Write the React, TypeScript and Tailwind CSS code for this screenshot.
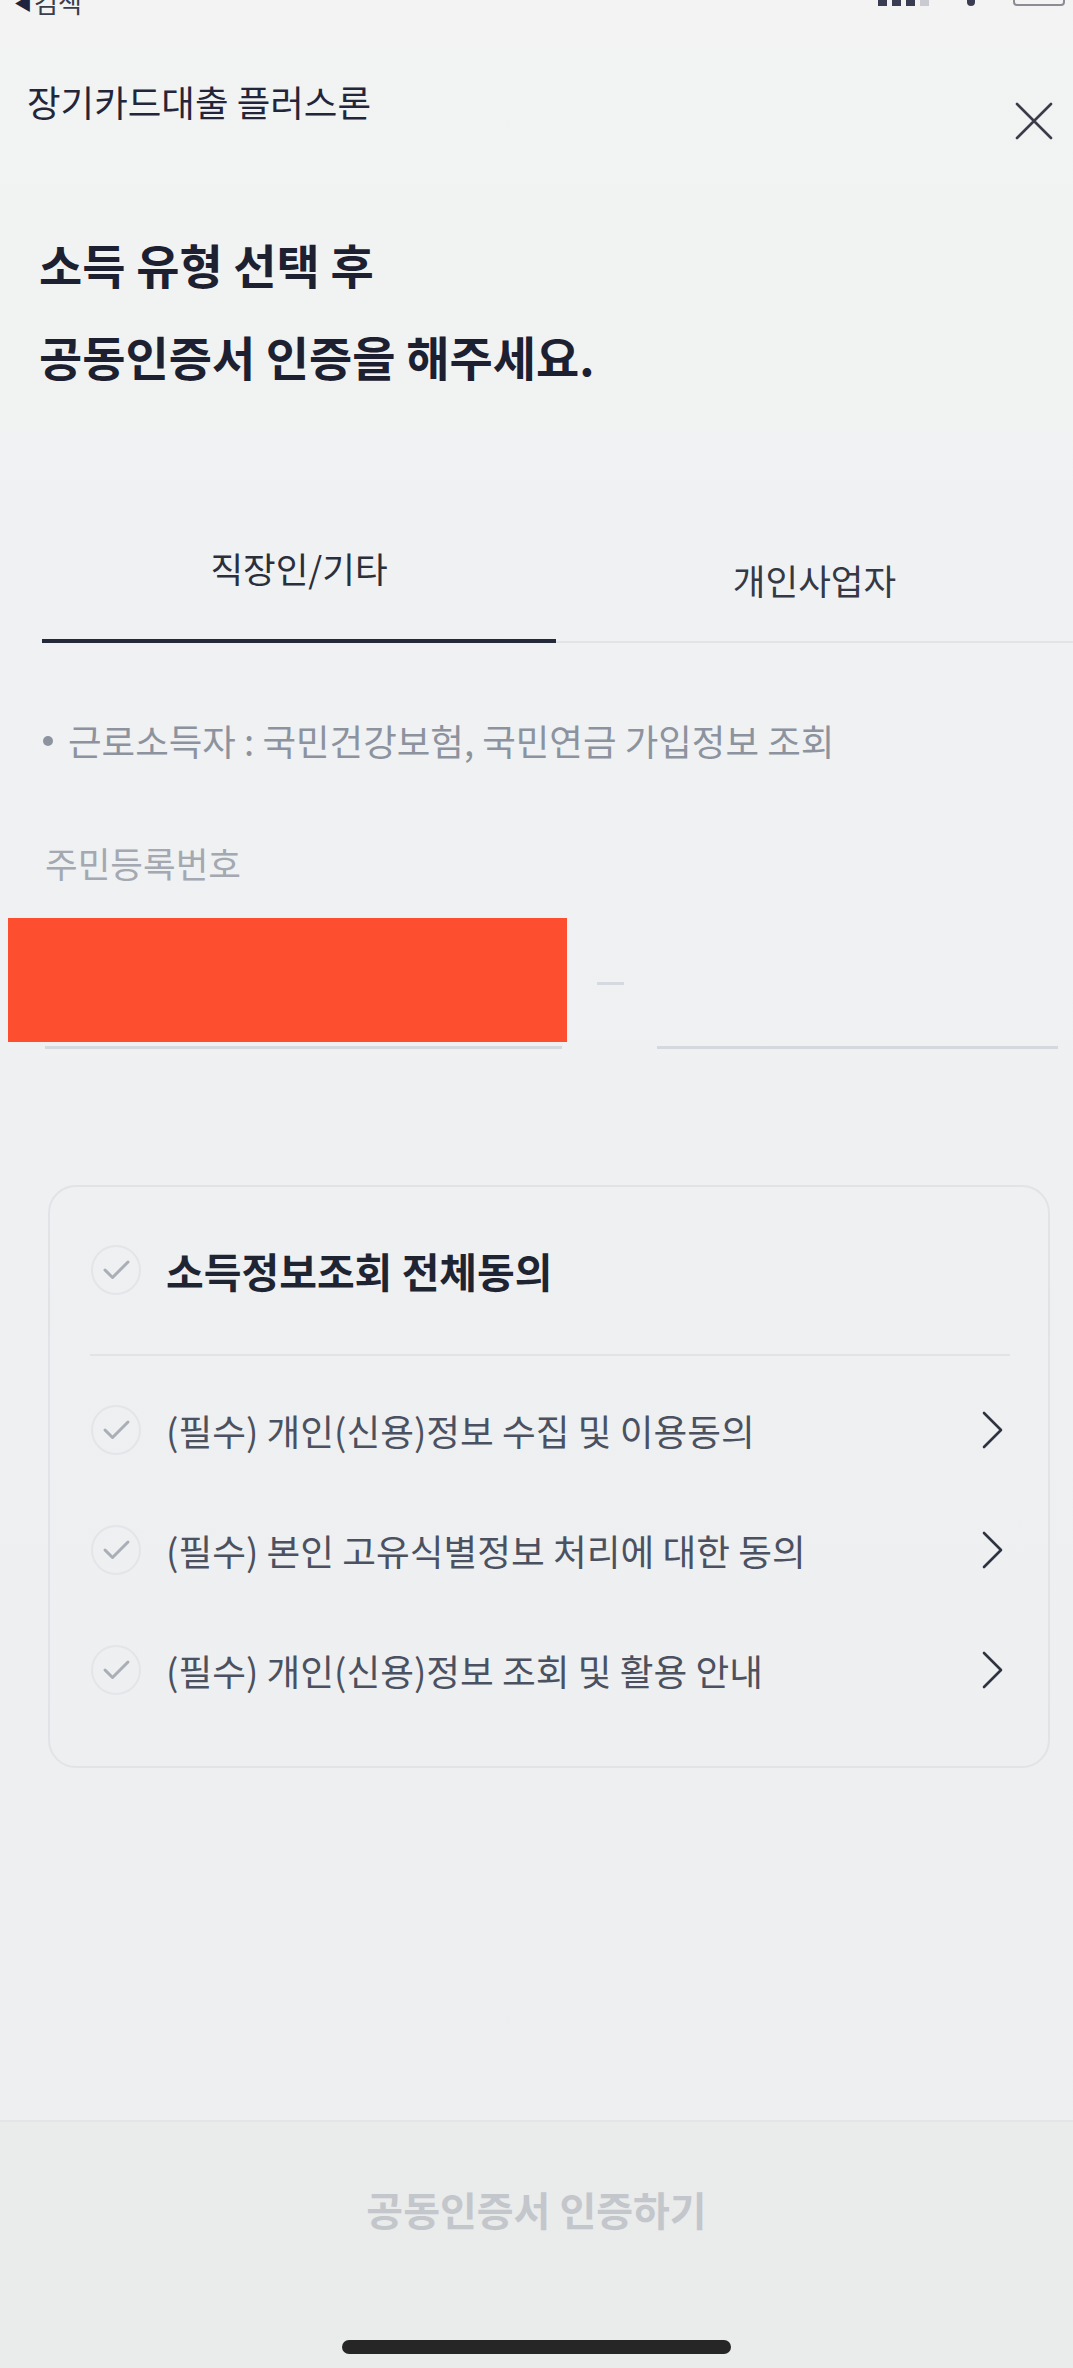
import React from "react";

const CheckCircle = () => (
  <svg width="50" height="50" viewBox="0 0 50 50" className="shrink-0">
    <circle cx="25" cy="25" r="24" fill="none" stroke="#e3e5e9" strokeWidth="2" />
    <path
      d="M14 25 L21.5 32.5 L37 17"
      fill="none"
      stroke="#a9aeb7"
      strokeWidth="3"
      strokeLinecap="round"
      strokeLinejoin="round"
    />
  </svg>
);

const Chevron = () => (
  <svg width="22" height="38" viewBox="0 0 22 38" className="shrink-0">
    <path
      d="M3 2 L20 19 L3 36"
      fill="none"
      stroke="#2f3340"
      strokeWidth="2.6"
      strokeLinecap="round"
      strokeLinejoin="round"
    />
  </svg>
);

const terms = [
  "(필수) 개인(신용)정보 수집 및 이용동의",
  "(필수) 본인 고유식별정보 처리에 대한 동의",
  "(필수) 개인(신용)정보 조회 및 활용 안내",
];

export default function App() {
  return (
    <div className="flex h-[2368px] w-[1073px] flex-col overflow-hidden bg-linear-to-b from-[#f2f3f2] via-[#eef0f2] to-[#eceef0] font-['Noto_Sans_CJK_KR','Noto_Sans',sans-serif]">
      {/* status bar, cut off by the photo */}
      <div className="flex h-[16px] items-start justify-between overflow-hidden">
        <div className="-mt-[11px] flex items-center pl-[14px] text-[26px] leading-[26px] text-[#3a3d4a]">
          <span className="mr-[2px] text-[18px] text-[#1f2340]">◀</span>
          <span>검색</span>
        </div>
        <div className="flex items-start gap-[38px] pr-[8px]">
          <div className="flex gap-[5px]">
            <div className="h-[6px] w-[9px] bg-[#3a3d52]" />
            <div className="h-[6px] w-[9px] bg-[#3a3d52]" />
            <div className="h-[6px] w-[9px] bg-[#3a3d52]" />
            <div className="h-[6px] w-[9px] bg-[#c9cbd0]" />
          </div>
          <div className="h-[6px] w-[8px] rounded-b-full bg-[#3a3d52]" />
          <div className="-mt-[6px] h-[12px] w-[52px] rounded-[4px] border-2 border-[#8a8d96]" />
        </div>
      </div>

      {/* header */}
      <div className="mt-[63px] flex items-start justify-between pl-[27px] pr-[20px]">
        <div className="text-[36.5px] leading-[46px] text-[#23263a]">장기카드대출 플러스론</div>
        <svg width="38" height="38" viewBox="0 0 38 38" className="mt-[23px]">
          <path d="M2 2 L36 36 M36 2 L2 36" stroke="#3b3b4a" strokeWidth="2.6" strokeLinecap="round" />
        </svg>
      </div>

      {/* heading */}
      <div className="mt-[78px] pl-[39px] text-[47px] font-semibold leading-[92px] text-[#1c2030]">
        <div>소득 유형 선택 후</div>
        <div>공동인증서 인증을 해주세요.</div>
      </div>

      {/* tabs */}
      <div className="ml-[42px] mt-[143px] flex">
        <div className="w-[514px] border-b-4 border-[#252a3a] pb-[43px] text-center text-[35.5px] leading-[46px] text-[#2a2f3c]">
          직장인/기타
        </div>
        <div className="flex-1 border-b-2 border-[#e2e4e8] pb-[38px] pt-[12px] text-center text-[35.5px] leading-[46px] text-[#343946]">
          개인사업자
        </div>
      </div>

      {/* notice */}
      <div className="ml-[43px] mt-[75px] flex items-center text-[36.5px] leading-[46px] text-[#8d939e]">
        <span className="mr-[15px] h-[10px] w-[10px] rounded-full bg-[#8e93a0]" />
        <span>근로소득자 : 국민건강보험, 국민연금 가입정보 조회</span>
      </div>

      {/* resident number */}
      <div className="ml-[45px] mt-[76px] text-[35.5px] leading-[46px] text-[#a3a8b1]">주민등록번호</div>
      <div className="mt-[32px] flex items-end">
        <div className="relative ml-[45px] h-[131px] w-[517px] border-b-[3px] border-[#d5d8de]">
          <div className="absolute -left-[37px] top-0 h-[124px] w-[559px] bg-[#fd4e2f]" />
        </div>
        <div className="mb-[64px] ml-[35px] h-[3px] w-[27px] bg-[#d6d9df]" />
        <div className="ml-[33px] h-[131px] w-[401px] border-b-[3px] border-[#d5d8de]" />
      </div>

      {/* agreements */}
      <div className="ml-[48px] mt-[136px] w-[1002px] rounded-[28px] border-2 border-[#e1e3e7] pb-[71px] pt-[58px]">
        <div className="flex items-center gap-[25px] pl-[41px]">
          <CheckCircle />
          <span className="text-[41px] font-bold leading-[50px] text-[#1f2433]">소득정보조회 전체동의</span>
        </div>
        <div className="ml-[40px] mr-[38px] mt-[59px] h-[2px] bg-[#e1e3e7]" />
        <div className="mt-[49px] flex flex-col gap-[70px]">
          {terms.map((t) => (
            <div key={t} className="flex items-center pl-[41px] pr-[45px]">
              <CheckCircle />
              <span className="ml-[25px] flex-1 text-[36.7px] leading-[50px] text-[#4b5160]">{t}</span>
              <Chevron />
            </div>
          ))}
        </div>
      </div>

      <div className="flex-1" />

      {/* bottom button */}
      <div className="flex h-[248px] flex-col items-center border-t-2 border-[#e4e5e6] bg-[#eaebeb]">
        <div className="mt-[60px] text-[40px] font-semibold leading-[54px] text-[#c3c6cb]">공동인증서 인증하기</div>
        <div className="mt-[104px] h-[14px] w-[389px] rounded-full bg-[#262626]" />
      </div>
    </div>
  );
}
